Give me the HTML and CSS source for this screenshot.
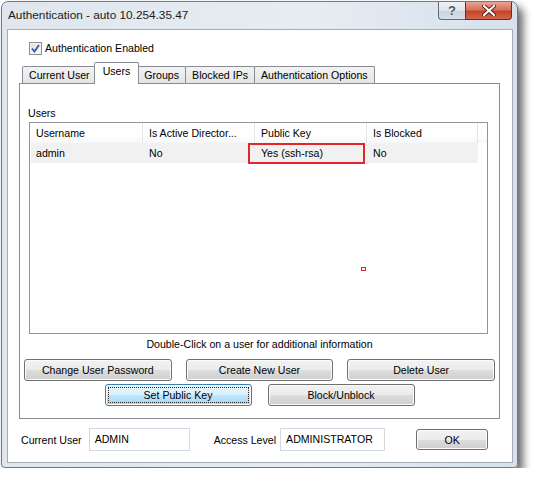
FILE: index.html
```html
<!DOCTYPE html>
<html>
<head>
    <title>Authentication - auto 10.254.35.47</title>
    <link rel="stylesheet" href="styles.css">
</head>
<body>
<div class="window">

    <!-- Caption: title text + help/close buttons -->
    <div class="titlebar">
        <span class="title">Authentication - auto 10.254.35.47</span>
        <div class="caption-buttons">
            <button type="button" class="cap-help">?</button>
            <button type="button" class="cap-close">
                <svg width="14" height="11" viewBox="0 0 14 11">
                    <path d="M2 1 L12 10 M12 1 L2 10" stroke="#5a1d14" stroke-width="4" stroke-linecap="round"/>
                    <path d="M2 1 L12 10 M12 1 L2 10" stroke="#fff" stroke-width="2.2" stroke-linecap="round"/>
                </svg>
            </button>
        </div>
    </div>

    <div class="client">
        <label class="auth-check">
            <span class="checkbox">
                <svg width="9" height="9" viewBox="0 0 9 9">
                    <path d="M1 4.5 L3.5 7.5 L8 1" fill="none" stroke="#3a5a9c" stroke-width="1.8"/>
                </svg>
            </span>
            Authentication Enabled
        </label>

        <div class="tabs">
            <div class="tab">Current User</div>
            <div class="tab selected">Users</div>
            <div class="tab">Groups</div>
            <div class="tab">Blocked IPs</div>
            <div class="tab">Authentication Options</div>
        </div>

        <div class="tab-panel">
            <div class="group-label">Users</div>

            <div class="listview">
                <div class="lv-header">
                    <div class="col c1">Username</div>
                    <div class="col c2">Is Active Director...</div>
                    <div class="col c3">Public Key</div>
                    <div class="col c4">Is Blocked</div>
                    <div class="col filler"></div>
                </div>
                <div class="lv-row selected">
                    <div class="col c1">admin</div>
                    <div class="col c2">No</div>
                    <div class="col c3">Yes (ssh-rsa)</div>
                    <div class="col c4">No</div>
                </div>
                <!-- highlight boxes drawn over the list -->
                <span class="mark-key"></span>
                <span class="mark-dot"></span>
            </div>

            <p class="hint">Double-Click on a user for additional information</p>

            <div class="btn-row three">
                <button type="button" class="btn">Change User Password</button>
                <button type="button" class="btn">Create New User</button>
                <button type="button" class="btn">Delete User</button>
            </div>
            <div class="btn-row two">
                <button type="button" class="btn focused">Set Public Key</button>
                <button type="button" class="btn">Block/Unblock</button>
            </div>
        </div>

        <div class="footer">
            <span class="lbl">Current User</span>
            <div class="textbox tb-user">ADMIN</div>
            <span class="lbl lbl-level">Access Level</span>
            <div class="textbox tb-level">ADMINISTRATOR</div>
            <button type="button" class="btn btn-ok">OK</button>
        </div>
    </div>
</div>
</body>
</html>
```

FILE: styles.css
```css
/* --- Base --- */
body { margin: 0; background: #fff; font-family: "Liberation Sans", Arial, sans-serif; font-size: 10.6px; color: #000; }
button { font-family: inherit; font-size: 10.6px; color: #000; }

/* --- Window frame --- */
.window {
    box-sizing: border-box;
    width: 517px; height: 467px;
    margin: 1px 0 0 1px;
    border: 1px solid #6f7a86;
    border-radius: 7px 7px 4px 4px;
    background: linear-gradient(to right, #dfe6ee, #e6ecf2 60%, #d6e1ec);
    box-shadow: 5px 6px 9px rgba(0, 0, 0, 0.6);
    display: flex; flex-direction: column;
}
.titlebar { height: 27px; display: flex; justify-content: space-between; align-items: flex-start; }
.title { padding: 5px 0 0 6px; font-size: 11.8px; line-height: 16px; color: #1b1b1b; }

.caption-buttons { display: flex; margin-right: 5px; }
.caption-buttons button { height: 18px; padding: 0; border: 1px solid #5e6b78; border-top: none; display: flex; align-items: center; justify-content: center; }
.cap-help {
    width: 27px; border-radius: 0 0 0 4px; border-right: none !important;
    background: linear-gradient(#eef2f5, #dde4eb 50%, #c9d3dd 51%, #d7e0e8);
    font-size: 13px !important; color: #4c5660 !important; font-weight: bold; text-shadow: 0 0 2px #fff;
}
.cap-close {
    width: 47px; border-radius: 0 0 4px 0;
    border-color: #6e2a1f !important;
    background: linear-gradient(#e8a597, #d8715c 45%, #c7432b 55%, #d2654c);
}

/* --- Client area --- */
.client {
    flex: 1;
    margin: 0 4px 4px 5px;
    border: 1px solid #a3adb8;
    background: #fff;
    display: flex; flex-direction: column;
}

.auth-check { display: flex; align-items: center; gap: 3px; margin: 12px 0 0 21px; height: 13px; line-height: 13px; }
.checkbox {
    box-sizing: border-box; width: 13px; height: 13px;
    border: 1px solid #8e8f8f;
    background: linear-gradient(135deg, #dcdcdc, #fff);
    box-shadow: inset 0 0 0 1px #f4f4f4;
    display: flex; align-items: center; justify-content: center;
}

/* --- Tabs --- */
.tabs { display: flex; align-items: flex-end; height: 20px; margin-top: 8px; padding-left: 14px; position: relative; z-index: 1; }
.tab {
    height: 16px; line-height: 17px; padding: 0 6px;
    border: 1px solid #898c95; border-bottom: none;
    margin-left: -1px;
    background: linear-gradient(#f3f3f3, #e4e4e4);
    border-radius: 2px 2px 0 0;
}
.tab:first-child { margin-left: 0; }
.tab.selected {
    height: 21px; line-height: 17px; margin: 0 -2px -1px -3px; padding: 0 8px;
    background: #fff; position: relative; z-index: 2;
}
.tab.selected + .tab { margin-left: 0; }

.tab-panel {
    margin: 0 12px 0 11px;
    border: 1px solid #898c95;
    background: #fff;
    padding: 22px 0 12px;
    display: flex; flex-direction: column;
}
.group-label { padding-left: 8px; line-height: 14px; }

/* --- List view --- */
.listview {
    position: relative;
    height: 210px;
    margin: 2px 11px 0 9px;
    border: 1px solid #8e949c;
    background: #fff;
}
.lv-header, .lv-row { display: flex; height: 20px; line-height: 20px; }
.lv-header .col { border-right: 1px solid #e3e5e8; background: linear-gradient(#fff, #fff 60%, #f6f7f8); }
.lv-header .col.filler { flex: 1; border-right: none; }
.col { box-sizing: border-box; padding-left: 6px; white-space: nowrap; overflow: hidden; }
.c1 { width: 113px; }
.c2, .c3 { width: 112px; }
.c4 { width: 111px; }
.lv-row.selected { margin-left: 1px; width: 447px; background: #f1f1f1; }
.lv-row.selected .c1 { width: 112px; padding-left: 5px; }

.mark-key {
    position: absolute; left: 218px; top: 20px;
    box-sizing: border-box; width: 117px; height: 21px;
    border: 2px solid #e3262b;
}
.mark-dot {
    position: absolute; left: 331px; top: 144px;
    box-sizing: border-box; width: 5px; height: 4px;
    border: 1px solid #e3262b;
}

.hint { margin: 3px 0 0; text-align: center; line-height: 14px; }

/* --- Buttons --- */
.btn {
    height: 22px; padding: 0;
    border: 1px solid #707070; border-radius: 3px;
    background: linear-gradient(#f2f2f2, #ebebeb 50%, #dddddd 51%, #cfcfcf);
    box-shadow: inset 0 0 0 1px #fbfbfb;
}
.btn.focused {
    border-color: #3c7fb1;
    background: linear-gradient(#eaf6fd, #d9f0fc 50%, #bee6fd 51%, #a7d9f5);
    outline: 1px dotted #222; outline-offset: -4px;
}
.btn-row { display: grid; padding: 0 4px; }
.btn-row.three { grid-template-columns: repeat(3, 1fr); column-gap: 14px; margin-top: 8px; }
.btn-row.two { grid-template-columns: 147px 147px; column-gap: 16px; justify-content: center; margin-top: 3px; }

/* --- Bottom bar --- */
.footer { display: flex; align-items: center; margin-top: 9px; padding: 0 0 0 13px; height: 23px; }
.lbl { margin-right: 7px; }
.lbl-level { margin-left: 24px; margin-right: 4px; }
.textbox {
    box-sizing: border-box; height: 23px;
    border: 1px solid #d5d8dc;
    padding: 3px 0 0 5px; line-height: 14px;
}
.tb-user { width: 101px; }
.tb-level { width: 105px; }
.btn-ok { width: 72px; height: 21px; margin-left: 31px; }
```
